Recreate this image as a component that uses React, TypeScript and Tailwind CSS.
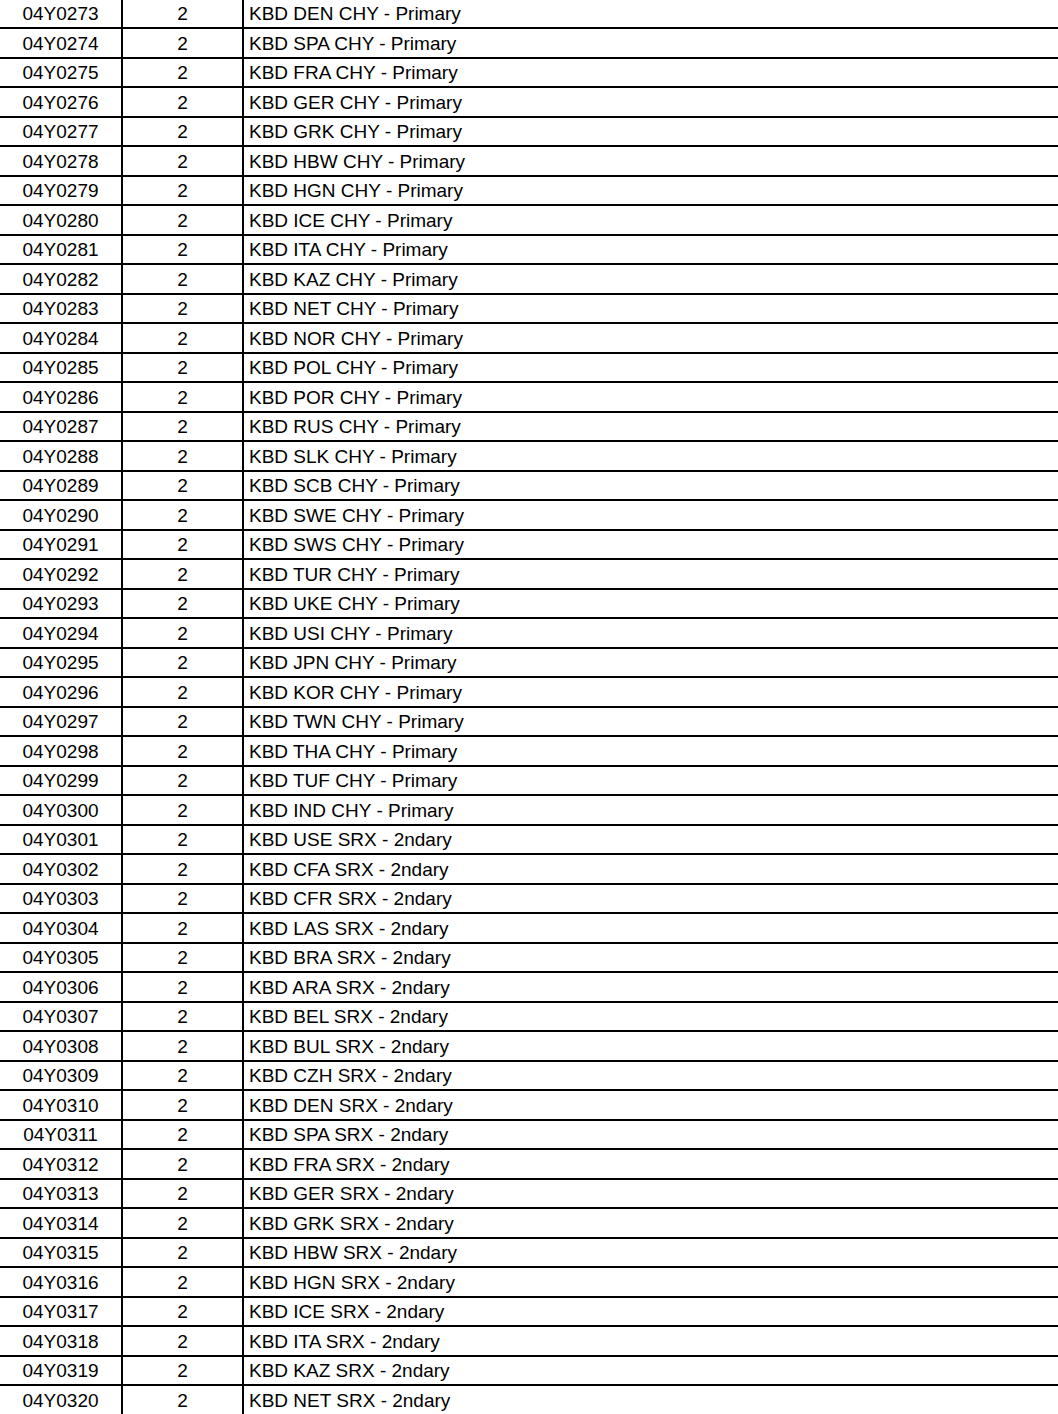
import React from "react";

const names: string[] = [
  "KBD DEN CHY - Primary",
  "KBD SPA CHY - Primary",
  "KBD FRA CHY - Primary",
  "KBD GER CHY - Primary",
  "KBD GRK CHY - Primary",
  "KBD HBW CHY - Primary",
  "KBD HGN CHY - Primary",
  "KBD ICE CHY - Primary",
  "KBD ITA CHY - Primary",
  "KBD KAZ CHY - Primary",
  "KBD NET CHY - Primary",
  "KBD NOR CHY - Primary",
  "KBD POL CHY - Primary",
  "KBD POR CHY - Primary",
  "KBD RUS CHY - Primary",
  "KBD SLK CHY - Primary",
  "KBD SCB CHY - Primary",
  "KBD SWE CHY - Primary",
  "KBD SWS CHY - Primary",
  "KBD TUR CHY - Primary",
  "KBD UKE CHY - Primary",
  "KBD USI CHY - Primary",
  "KBD JPN CHY - Primary",
  "KBD KOR CHY - Primary",
  "KBD TWN CHY - Primary",
  "KBD THA CHY - Primary",
  "KBD TUF CHY - Primary",
  "KBD IND CHY - Primary",
  "KBD USE SRX - 2ndary",
  "KBD CFA SRX - 2ndary",
  "KBD CFR SRX - 2ndary",
  "KBD LAS SRX - 2ndary",
  "KBD BRA SRX - 2ndary",
  "KBD ARA SRX - 2ndary",
  "KBD BEL SRX - 2ndary",
  "KBD BUL SRX - 2ndary",
  "KBD CZH SRX - 2ndary",
  "KBD DEN SRX - 2ndary",
  "KBD SPA SRX - 2ndary",
  "KBD FRA SRX - 2ndary",
  "KBD GER SRX - 2ndary",
  "KBD GRK SRX - 2ndary",
  "KBD HBW SRX - 2ndary",
  "KBD HGN SRX - 2ndary",
  "KBD ICE SRX - 2ndary",
  "KBD ITA SRX - 2ndary",
  "KBD KAZ SRX - 2ndary",
  "KBD NET SRX - 2ndary",
];

export default function App() {
  return (
    <div
      className="w-[1058px] h-[1414px] overflow-hidden bg-white text-black text-[19px]"
      style={{ fontFamily: '"Liberation Sans", Arial, sans-serif' }}
    >
      <div className="-mt-[0.5px]">
        {names.map((n, i) => (
          <div key={i} className="flex h-[29.5px] border-b-2 border-black leading-none">
            <div className="w-[121px] flex items-center justify-center pt-[1px]">
              {"04Y0" + String(273 + i)}
            </div>
            <div className="w-[123px] border-x-2 border-black flex items-center justify-center pt-[1px]">
              2
            </div>
            <div className="flex-1 flex items-center pl-[5px] pt-[1px]">{n}</div>
          </div>
        ))}
      </div>
    </div>
  );
}
